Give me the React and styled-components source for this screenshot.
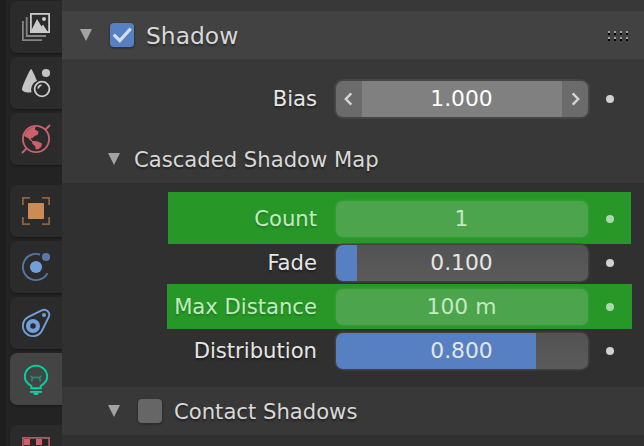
import React from "react";
import styled, { createGlobalStyle } from "styled-components";

const Global = createGlobalStyle`
  * { box-sizing: border-box; }
  body { margin: 0; overflow: hidden; background: #303030; }
`;

const Editor = styled.div`
  display: flex;
  width: 644px;
  height: 446px;
  overflow: hidden;
  background: #303030;
  color: #e2e2e2;
  font-family: "DejaVu Sans", sans-serif;
  font-size: 21.15px;
  line-height: 26px;
  text-shadow: 0 2px 2px rgba(0, 0, 0, 0.4);
`;

const Sidebar = styled.nav`
  display: flex;
  flex-direction: column;
  gap: 20px;
  flex: 0 0 62px;
  padding: 1px 0 0 4px;
  border-left: 6px solid #1e1e1e;
  background: #232323;
`;

const TabGroup = styled.div`
  display: flex;
  flex-direction: column;
  gap: 4px;
`;

const Tab = styled.div`
  display: flex;
  align-items: center;
  justify-content: center;
  flex: 0 0 52px;
  border-radius: 7px 0 0 7px;
  background: ${(p) => (p.$active ? "#444444" : "#2b2b2b")};
  box-shadow: 0 1px 2px rgba(0, 0, 0, 0.35);
`;

const Icon = styled.svg`
  display: block;
  width: 28px;
  height: 28px;
  overflow: visible;
`;

const Properties = styled.main`
  flex: 1;
  min-width: 0;
  padding-top: 11px;
  background: #383838;
`;

const PanelHeader = styled.header`
  display: flex;
  align-items: center;
  height: 48px;
  padding: 0 15px 0 18px;
  background: #424242;
  color: #d8d8d8;
  font-size: 23.4px;
`;

const SubHeader = styled.header`
  display: flex;
  align-items: center;
  height: 48px;
  padding-left: 46px;
  background: #383838;
  color: #d8d8d8;
`;

const Title = styled.span`
  padding-top: 2px;
`;

const Triangle = styled.svg`
  width: 12px;
  height: 12px;
  margin-right: ${(p) => p.$gap}px;
  fill: #a3a3a3;
`;

const Checkbox = styled.span`
  display: grid;
  place-items: center;
  width: 24px;
  height: 24px;
  margin-right: 12px;
  border-radius: 4px;
  background: ${(p) => (p.$checked ? "#5680c2" : "#666666")};
  box-shadow: 0 1px 2px 1px rgba(0, 0, 0, 0.22);
`;

const Grip = styled.svg`
  width: 21px;
  height: 10px;
  margin: 2px 0 0 auto;
`;

const BiasBody = styled.section`
  height: 76px;
  padding-top: 22px;
`;

const Settings = styled.section`
  height: 204px;
  padding-top: 9px;
  background: #303030;
`;

const Row = styled.div`
  display: flex;
  align-items: flex-start;
  height: ${(p) => p.$height}px;
  margin-left: ${(p) => p.$left || 106}px;
  margin-right: ${(p) => p.$right || 13}px;
  padding-top: ${(p) => p.$top}px;
  padding-right: ${(p) => 30 - (p.$right || 13)}px;
  background: ${(p) => (p.$marked ? "#279827" : "transparent")};
  color: ${(p) => (p.$marked ? "#c3e9c0" : "#e5e5e5")};
  text-shadow: ${(p) => (p.$marked ? "0 2px 2px rgba(20, 90, 20, 0.45)" : "inherit")};
`;

const Label = styled.span`
  flex: 1;
  padding: 5px 19px 0 0;
  text-align: right;
  white-space: nowrap;
`;

const Field = styled.div`
  display: flex;
  align-items: center;
  justify-content: center;
  flex: 0 0 252px;
  height: 36px;
  padding-right: 1px;
  border-radius: 7px;
  overflow: hidden;
  background: ${(p) =>
    p.$marked
      ? "#4ca44d"
      : `linear-gradient(90deg, #5680c2 ${p.$fill}px, transparent ${p.$fill}px), linear-gradient(#535353, #5a5a5a)`};
  box-shadow: 0 0 0 1.5px ${(p) => (p.$marked ? "#319c31" : "#404040")};
  font-size: 21.8px;
  text-shadow: none;
`;

const HoverField = styled(Field)`
  justify-content: space-between;
  padding-right: 0;
  background: #6b6b6b;
  box-shadow: 0 0 0 2px #454545;
  color: #ffffff;
`;

const HoverValue = styled.span`
  display: grid;
  place-items: center;
  width: 200px;
  height: 36px;
  padding-right: 1px;
  background: #808080;
`;

const Step = styled.svg`
  width: 26px;
  height: 36px;
  fill: none;
  stroke: #d4d4d4;
  stroke-width: 2.4;
`;

const Dot = styled.i`
  width: 8px;
  height: 8px;
  margin: 14px 0 0 18px;
  border-radius: 50%;
  background: ${(p) => (p.$marked ? "#a9d9a8" : "#d0d0d0")};
`;

function ViewLayerIcon() {
  return (
    <Icon viewBox="0 0 28 28" fill="none">
      <path d="M4.7 4v19H24M.9 8v19.1H20" stroke="#858585" strokeWidth="1.8" />
      <rect x="8.9" y=".9" width="18.2" height="18.2" stroke="#cacaca" strokeWidth="1.8" />
      <path d="M9.5 19.2V17L15 6l4.5 7.5 1.5-2 5 7.7Z" fill="#cacaca" />
      <circle cx="22" cy="6" r="2" fill="#cacaca" />
    </Icon>
  );
}

function SceneIcon() {
  return (
    <Icon viewBox="0 0 28 28" fill="none">
      <path d="M9 0C8 0 0 18 0 20.2 0 22.4 4 24 9.5 23.2c-1-5 1-9.4 5.5-11.2C13 7 10 0 9 0Z" fill="#c4c4c4" />
      <circle cx="24" cy="4" r="4.1" fill="#c4c4c4" />
      <circle cx="20" cy="20" r="7.4" stroke="#cacaca" strokeWidth="1.8" />
      <path d="M16.2 19.5a3.7 3.7 0 0 1 3.3-3.3" stroke="#cacaca" strokeWidth="1.7" />
    </Icon>
  );
}

function WorldIcon() {
  return (
    <Icon viewBox="0 0 28 28" fill="none" stroke="#c9626d" strokeWidth="1.8">
      <circle cx="14" cy="14" r="13.1" />
      <path d="M0 28l4.5-4.5M23.5 4.5L28 0" />
      <path d="M2 11C3.5 6 8 2 13.5 1.7L12.9 4.6l3.6 2-.8 3.2-2.6 1-2.7 2.2-1.8.6L10.5 16l4.7.2 4.8 2.2-.8 3.5-2.9 2.4h-2.8l-.4-3.2-2.7-2-.2-2.3-1.9-1.3-1.6-2L4 12Z" fill="#c9626d" stroke="none" />
    </Icon>
  );
}

function ObjectIcon() {
  return (
    <Icon viewBox="0 0 28 28" fill="none">
      <path d="M8 .9H.9V8M20 .9h7.1V8M8 27.1H.9V20M20 27.1h7.1V20" stroke="#8d623f" strokeWidth="1.8" />
      <rect x="6" y="6" width="16" height="16" rx=".6" fill="#cb8b54" />
    </Icon>
  );
}

function PhysicsIcon() {
  return (
    <Icon viewBox="0 0 28 28" fill="none">
      <path d="M18 1.5A13.1 13.1 0 1 0 25.5 20.3" stroke="#5676a3" strokeWidth="1.9" />
      <circle cx="24" cy="4" r="4.1" fill="#587aa9" />
      <circle cx="14" cy="14" r="6.1" fill="#729ed9" />
    </Icon>
  );
}

function ConstraintIcon() {
  return (
    <Icon viewBox="0 0 28 28" fill="none" stroke="#729ed9">
      <path d="M20.05 21.5A10.1 10.1 0 1 1 6.5 7.95L19.7 1.4A5.1 5.1 0 0 1 26.6 8.3Z" strokeWidth="1.9" />
      <circle cx="11" cy="17" r="4.9" strokeWidth="4.3" />
      <circle cx="22" cy="6" r="2" fill="#729ed9" stroke="none" />
    </Icon>
  );
}

function LightDataIcon() {
  return (
    <Icon viewBox="0 0 28 28" fill="none" stroke="#00d6a0" strokeWidth="1.9">
      <path d="M9.3 23.3V21C5 18.5 2.8 15.5 2.8 11.8a11.2 11.2 0 0 1 22.4 0c0 3.7-2.2 6.7-6.5 9.2v2.3Z" />
      <path d="M8 26.9h12" />
      <path d="M11.2 28h5.6c-.2 1.2-1 1.2-1.3 2h-3c-.3-.8-1.1-.8-1.3-2Z" fill="#00d6a0" stroke="none" />
      <path d="M8.5 10.7l1.8 1.8h7.4l1.8-1.8M10.6 12.5l-1 4M17.4 12.5l1 4" stroke="#179274" strokeWidth="1.6" />
    </Icon>
  );
}

function TextureIcon() {
  return (
    <Icon viewBox="0 0 28 28" fill="none">
      <path d="M2 2h6v6H2zM14 2h6v6h-6z" fill="#c9626d" />
      <path d="M8 2h6v6H8zM20 2h6v6h-6z" fill="#2b2226" />
      <rect x=".9" y=".9" width="26.2" height="26.2" stroke="#b45661" strokeWidth="1.8" />
    </Icon>
  );
}

function DisclosureTriangle({ gap }) {
  return (
    <Triangle $gap={gap} viewBox="0 0 12 12">
      <path d="M0 0h12L6 12Z" />
    </Triangle>
  );
}

function GripDots() {
  return (
    <Grip viewBox="0 0 21 10">
      {[0, 6, 12, 18].map((x) => (
        <g key={x}>
          <path d={`M${x} 0h2v2h-2zM${x} 6h2v2h-2z`} fill="#a0a0a0" />
          <path d={`M${x} 2h2v2h-2zM${x} 8h2v2h-2z`} fill="#050505" />
        </g>
      ))}
    </Grip>
  );
}

function Property({ label, value, fill = 0, marked, ...row }) {
  return (
    <Row $marked={marked} $height={row.height} $top={row.top} $left={row.left} $right={row.right}>
      <Label>{label}</Label>
      <Field $marked={marked} $fill={fill}>{value}</Field>
      <Dot $marked={marked} />
    </Row>
  );
}

export default function App() {
  return (
    <Editor>
      <Global />
      <Sidebar>
        <TabGroup>
          <Tab><ViewLayerIcon /></Tab>
          <Tab><SceneIcon /></Tab>
          <Tab><WorldIcon /></Tab>
        </TabGroup>
        <TabGroup>
          <Tab><ObjectIcon /></Tab>
          <Tab><PhysicsIcon /></Tab>
          <Tab><ConstraintIcon /></Tab>
          <Tab $active><LightDataIcon /></Tab>
        </TabGroup>
        <TabGroup>
          <Tab><TextureIcon /></Tab>
        </TabGroup>
      </Sidebar>
      <Properties>
        <PanelHeader>
          <DisclosureTriangle gap={18} />
          <Checkbox $checked>
            <svg width="20" height="20" viewBox="0 0 20 20" fill="none" stroke="#d3ddee" strokeWidth="3.2">
              <path d="M1.8 9.6l6 6.1L18.7 3.7" />
            </svg>
          </Checkbox>
          <Title>Shadow</Title>
          <GripDots />
        </PanelHeader>
        <BiasBody>
          <Row $height={36} $top={0}>
            <Label>Bias</Label>
            <HoverField>
              <Step viewBox="0 0 26 36"><path d="M15.3 12.3L9.8 18l5.5 5.7" /></Step>
              <HoverValue>1.000</HoverValue>
              <Step viewBox="0 0 26 36"><path d="M10.7 12.3L16.2 18l-5.5 5.7" /></Step>
            </HoverField>
            <Dot />
          </Row>
        </BiasBody>
        <SubHeader>
          <DisclosureTriangle gap={14} />
          <Title>Cascaded Shadow Map</Title>
        </SubHeader>
        <Settings>
          <Property label="Count" value="1" height={52} top={9} marked />
          <Property label="Fade" value="0.100" height={40} top={1} fill={21} />
          <Property label="Max Distance" value="100 m" height={45} top={5} left={105} right={12} marked />
          <Property label="Distribution" value="0.800" height={40} top={4} fill={200} />
        </Settings>
        <SubHeader>
          <DisclosureTriangle gap={18} />
          <Checkbox />
          <Title>Contact Shadows</Title>
        </SubHeader>
        <Settings />
      </Properties>
    </Editor>
  );
}
